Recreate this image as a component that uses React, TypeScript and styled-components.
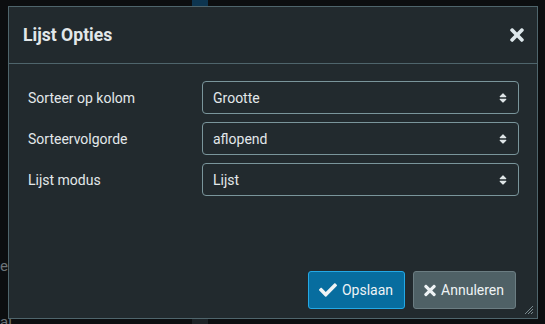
import React from 'react';
import styled, { createGlobalStyle } from 'styled-components';
import { FaCheck, FaTimes, FaSort } from 'react-icons/fa';

const GlobalStyle = createGlobalStyle`
  html, body {
    margin: 0;
    padding: 0;
    background: #0c0e10;
    font-family: Roboto, 'Liberation Sans', sans-serif;
  }
`;

const Page = styled.div`
  position: relative;
  width: 545px;
  height: 324px;
  overflow: hidden;
  padding: 6px 7px 5px 8px;
  box-sizing: border-box;
  display: flex;
`;

const Backdrop = styled.div`
  position: absolute;
  inset: 0;
  z-index: 0;
`;

const BackStrip = styled.div<{ $top: boolean }>`
  position: absolute;
  left: 192px;
  width: 16px;
  height: 8px;
  ${(p) => (p.$top ? 'top: 0;' : 'bottom: 0;')}
  background: ${(p) => (p.$top ? '#0d3550' : '#1c2226')};
`;

const BackText = styled.span<{ $y: number }>`
  position: absolute;
  left: 0;
  top: ${(p) => p.$y}px;
  font-size: 15px;
  line-height: 16px;
  color: #6b7378;
`;

const Dialog = styled.div`
  position: relative;
  z-index: 1;
  flex: 1;
  display: flex;
  flex-direction: column;
  background: #222a2e;
  border: 1px solid #4f656c;
  color: #e2e8ea;
`;

const Header = styled.div`
  height: 56px;
  display: flex;
  align-items: center;
  justify-content: space-between;
  padding: 0 13px 0 14px;
  border-bottom: 1px solid #4f656c;
`;

const Title = styled.h4`
  margin: 0;
  font-size: 17.6px;
  font-weight: 700;
  color: #e2e8ea;
`;

const CloseButton = styled.button`
  background: none;
  border: none;
  padding: 0;
  color: #dde7eb;
  display: flex;
  align-items: center;
`;

const CloseIcon = styled(FaTimes)`
  width: 14px;
  height: 20px;
`;

const Body = styled.div`
  flex: 1;
  padding: 17px 18px 0 18px;
  display: flex;
  flex-direction: column;
  gap: 8px;
`;

const Row = styled.div`
  display: grid;
  grid-template-columns: 175px 1fr;
  align-items: center;
`;

const Label = styled.label`
  font-size: 14px;
  padding-left: 1px;
  color: #e2e8ea;
`;

const SelectBox = styled.div`
  height: 33px;
  box-sizing: border-box;
  border: 1px solid #7a959b;
  border-radius: 4px;
  display: flex;
  align-items: center;
  justify-content: space-between;
  padding: 0 9px 0 10px;
  font-size: 14px;
  color: #e2e8ea;
`;

const SortIcon = styled(FaSort)`
  font-size: 12px;
  color: #dfe5e7;
`;

const Footer = styled.div`
  display: flex;
  justify-content: flex-end;
  gap: 8px;
  padding: 0 21px 9px 0;
`;

const Button = styled.button<{ $primary?: boolean }>`
  height: 38px;
  box-sizing: border-box;
  display: flex;
  align-items: center;
  gap: 5px;
  padding: 0 11px 0 10px;
  border-radius: 3px;
  font-family: Roboto, 'Liberation Sans', sans-serif;
  font-size: 14px;
  color: #eef3f5;
  background: ${(p) => (p.$primary ? '#076d9f' : '#4f6166')};
  border: 1px solid ${(p) => (p.$primary ? '#23a9e6' : '#6b7d82')};
`;

const CheckIcon = styled(FaCheck)`
  width: 18px;
  height: 18px;
`;

const CancelIcon = styled(FaTimes)`
  width: 12px;
  height: 17px;
`;

const Grip = styled.svg`
  position: absolute;
  right: 3px;
  bottom: 3px;
`;

const rows = [
  { label: 'Sorteer op kolom', value: 'Grootte' },
  { label: 'Sorteervolgorde', value: 'aflopend' },
  { label: 'Lijst modus', value: 'Lijst' },
];

export default function App() {
  return (
    <>
      <GlobalStyle />
      <Page>
        <Backdrop>
          <BackStrip $top />
          <BackStrip $top={false} />
          <BackText $y={258}>e</BackText>
          <BackText $y={314}>al</BackText>
        </Backdrop>
        <Dialog>
          <Header>
            <Title>Lijst Opties</Title>
            <CloseButton aria-label="Sluiten">
              <CloseIcon />
            </CloseButton>
          </Header>
          <Body>
            {rows.map((r) => (
              <Row key={r.label}>
                <Label>{r.label}</Label>
                <SelectBox>
                  <span>{r.value}</span>
                  <SortIcon />
                </SelectBox>
              </Row>
            ))}
          </Body>
          <Footer>
            <Button $primary>
              <CheckIcon />
              Opslaan
            </Button>
            <Button>
              <CancelIcon />
              Annuleren
            </Button>
          </Footer>
          <Grip width="10" height="10" viewBox="0 0 10 10">
            <path d="M9 1L1 9M9 4L4 9M9 7L7 9" stroke="#7b8b90" strokeWidth="1" />
          </Grip>
        </Dialog>
      </Page>
    </>
  );
}
